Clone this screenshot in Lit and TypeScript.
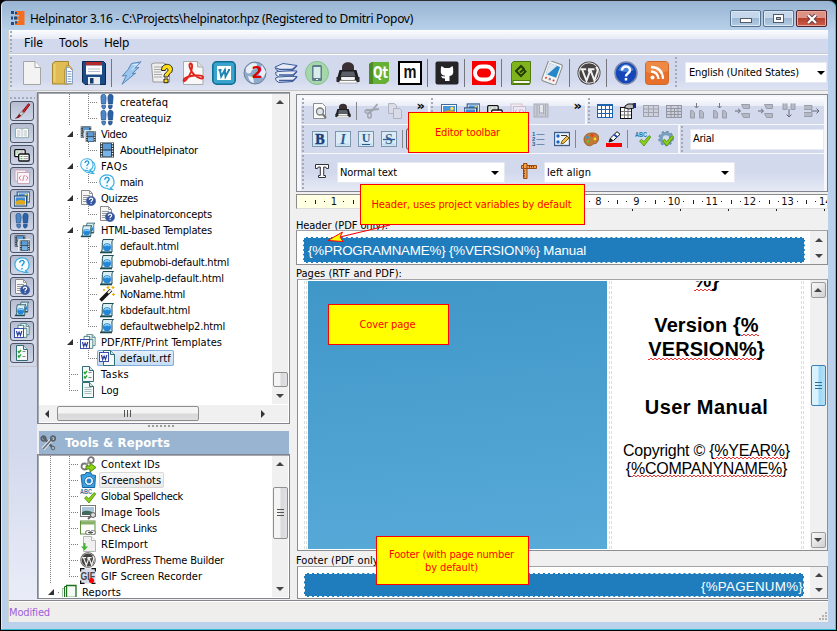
import { LitElement, html, css, svg } from "lit";
import { customElement, property } from "lit/decorators.js";

/* ---------- icons ---------- */

const page = svg`<path d="M2.5.5h7l4 4v11h-11z" fill="#f4f8f8" stroke="#2f6f73"/><path d="M9.5.5v4h4" fill="#d5e6e6" stroke="#2f6f73"/>`;
const wBadge = svg`<rect x="0.5" y="5.500" width="9" height="9" fill="#fff" stroke="#3a4fa8"/><path d="M2.500 8l1.200 4.500 1.400-3.500 1.400 3.500L7.800 8" fill="none" stroke="#2b3f9c" stroke-width="1.200"/>`;
const scroll = svg`<path d="M4 1.500h10.500c-2 1-1.500 3-1.500 5V14H2.500C4 10 2.500 6 4 1.500z" fill="#d9eef2" stroke="#1f4d55"/><path d="M1 14.500h12" stroke="#1f4d55" stroke-width="1.600"/><circle cx="8" cy="9.300" r="4" fill="#2486d6"/><path d="M5.500 8q2.500-2.500 5 0" fill="none" stroke="#8fd0ff" stroke-width="1.500"/>`;
const film = svg`<rect x="1" y="0.500" width="14" height="15" fill="#26343c"/><rect x="4" y="1.500" width="8" height="6" fill="#5c9bd8"/><rect x="4" y="8.500" width="8" height="6" fill="#79b3e8"/><path d="M2.500 1v14M13.500 1v14" stroke="#fff" stroke-width="1.400" stroke-dasharray="1.300 1.200"/>`;
const feet = svg`<path d="M2 4C1.500 1.500 3 0 4.500 0S7.500 2 7 5.500L6.500 10h-4zM2.700 11.500h3.800c.5 5-3.800 4.600-3.800 0z" fill="#4f86c6" stroke="#21518c" stroke-width=".7"/><path d="M14 4c.5-2.500-1-4-2.500-4S8.500 2 9 5.500l.5 4.500h4zM13.300 11.500H9.500c-.5 5 3.800 4.600 3.800 0z" fill="#2b62a4" stroke="#1b4680" stroke-width=".7"/>`;
const bubble = svg`<path d="M8 .8c8 0 9 10.400 3.500 13l2 1.700c-3 .3-4.500-.7-5.500-1C-1.500 14-1.500.8 8 .8z" fill="#f5fcff" stroke="#39ade0" stroke-width="1.200"/><path d="M5.800 5.800c0-3.400 4.700-3 4.300-.3C9.800 7.200 8 7 8 9.300M8 11v1.400" fill="none" stroke="#2496d2" stroke-width="1.400"/>`;
const quiz = svg`<path d="M1.500.5h8l3 3v11h-11z" fill="#f6f6f6" stroke="#8a8a8a"/><path d="M9.500.5v3h3M3 5.500h7M3 7.500h7M3 9.500h4M3 11.500h3" fill="none" stroke="#999"/><circle cx="11" cy="11" r="4.700" fill="#35559e" stroke="#4a68ab" stroke-width=".6"/><path d="M9.400 9.700c0-2 3.400-2 3.200 0-.1 1.100-1.500 1-1.500 2.200m0 .8v1" fill="none" stroke="#fff" stroke-width="1.200"/>`;
const wp = svg`<circle cx="12" cy="12" r="11.500" fill="#464342"/><circle cx="12" cy="12" r="10.200" fill="#464342" stroke="#e8e8e8" stroke-width="1"/><path d="M3.200 8.300h6M11 8.300h6.500M5.300 8.800l4.200 11 3-8.400-1-2.600m2 0l3.900 10.700 3-9c.8-2.500-1-2.800-1-4.600" fill="none" stroke="#f0f0f0" stroke-width="1.900"/>`;
const printer = svg`<path d="M6 11V6c0-6.500 12-6.500 12 0v5z" fill="#3a2f33"/><path d="M3.500 9h17l2.500 9H1z" fill="#1d1d1f"/><path d="M6 10.500h12l1.500 5h-15z" fill="#5a5f68"/><path d="M5.500 16h13l2 3.500h-17z" fill="#f2f2f2"/><path d="M.5 16h4l1 3h13l1-3h4v5H.5z" fill="#26272b"/><path d="M4 19.500h16l1.500 2.500h-19z" fill="#fff" stroke="#777" stroke-width=".5"/>`;
const pic = svg`<rect x=".5" y="1.500" width="15" height="12" fill="#fff" stroke="#3f6b9b"/><rect x="2" y="3" width="12" height="9" fill="#4a94db"/><path d="M2 9q6-3 12-.5V12H2z" fill="#d8a51c"/><circle cx="11" cy="5.500" r="1.700" fill="#ffe34a"/>`;
const palette = svg`<path d="M8 2c8-1 9 5 6.500 9-1.500 2.500-4 1-5.500 3-3 2.500-8.500-1-8-6 .3-3.500 3-5.700 7-6z" fill="#c17a36" stroke="#8a4b14" stroke-width=".7"/><circle cx="4.500" cy="6.500" r="1.400" fill="#2a9adf"/><circle cx="9" cy="4.500" r="1.400" fill="#ee3b2b"/><circle cx="12" cy="8" r="1.400" fill="#ffd91c"/><circle cx="5" cy="10.500" r="1.400" fill="#5fbf39"/>`;
const check = svg`<path d="M4.500 10l2-1.700 2.300 2.300 5.200-6 1.800 1.300L9 15z" fill="#8ccf18" stroke="#4a8a0a" stroke-width=".8"/>`;
const letterBox = svg`<rect x=".5" y=".5" width="15" height="15" fill="#dcecf7" stroke="#7b97ad"/><path d="M1.500 12.500h13v2h-13z" fill="#c2dcee"/>`;
const windows = svg`<rect x=".7" y="2.700" width="10.500" height="7" rx="1" fill="#fff" stroke="#111" stroke-width="1.300"/><rect x="4.700" y="7" width="10.500" height="7" rx="1" fill="#fff" stroke="#111" stroke-width="1.300"/><path d="M2.500 5h2M2.500 7h1M6.500 9.500h2M6.500 11.700h2" stroke="#3aa83a"/><path d="M5.500 5h4M9.500 9.500H14M9.500 11.700H14" stroke="#999"/>`;
const code = svg`<rect x="1" y="1" width="11" height="11" fill="#f6eef2" stroke="#c9a7b5"/><rect x="3.500" y="3.500" width="12" height="11" fill="#faf5f7" stroke="#c9a7b5"/><path d="M7 6.500L5 9l2 2.500M12 6.500L14 9l-2 2.500M10.300 6L8.700 12" fill="none" stroke="#dd7aa0"/>`;

const ICONS: Record<string, unknown> = {
  app: svg`<path d="M5 1h9.500v14H5v-4h4V9.500H5v-3h4V5H5z" fill="#f56d1e"/><path d="M1 1h3v3H1zM5 2h2v2H5zM1 6.500h2v3H1zM4 6.500h3v3H4zM1 12h3v3H1zM5 11.500h2v2H5z" fill="#1f4c7c"/>`,
  new: svg`<path d="M3.500.5H15l5.500 6v17h-17z" fill="#f3f3f3" stroke="#a5a5a5"/><path d="M15 .5v6h5.500" fill="#fff" stroke="#a5a5a5"/>`,
  open: svg`<path d="M1.500 2.500L4 .5h13.500v22.500h-16z" fill="#dfbd54" stroke="#a8842c"/><path d="M3.500 3v18" stroke="#ecd074" stroke-width="2"/><path d="M13.500 8.500q2 0 2-4h3l3 4v14.500h-8z" fill="#e6c35c" stroke="#a8842c" stroke-width=".7"/><path d="M15.500 6.500h3l3 3v13h-6z" fill="#fff" stroke="#8aa2bd"/><path d="M16.500 10.500h4M16.500 13h4M16.500 15.500h4M16.500 18h4M16.500 20.500h4" stroke="#7da1cd"/>`,
  save: svg`<path d="M.5.5h21l2 2v21H3L.5 21z" fill="#1d4b86" stroke="#0b2850"/><rect x="4" y="1" width="16" height="3.500" fill="#b22a2a"/><rect x="4" y="4.500" width="16" height="9" fill="#fff"/><path d="M6 8h12M6 10.500h12" stroke="#b5c0cc"/><rect x="6" y="16" width="12" height="7.500" fill="#e8eef4"/><rect x="8" y="17" width="3.500" height="5.500" fill="#173a66"/>`,
  bolt: svg`<path d="M12.500 2.500L22 .8 15.800 7l4.200-.6-7 6.400 3.600-.6L3 23.300l4.500-9-4.300.8L9 8.500z" fill="#9ac6ee" stroke="#5a88b8"/><path d="M13.500 4l5-1-6 6" fill="none" stroke="#e4f3ff"/>`,
  helpdoc: svg`<path d="M1.500 3l3-1h9l6 3v16H3z" fill="#eee" stroke="#999"/><path d="M4 6h9M4 8.500h7M4 11h7M4 13.500h8M4 16h8" stroke="#aaa"/><path d="M11.500 9.500c-.5-8 11-8 11-1 0 4-4.500 4-4.500 7.500h-4c0-5 4-4.500 4-7 0-2-2.700-1.800-2.700.5zM14 18h4v3.700h-4z" fill="#ffdd16" stroke="#222"/>`,
  pdf: svg`<path d="M2.500.5h14l5.500 5.500v17.500H2.500z" fill="#f8f8f8" stroke="#aaa"/><path d="M16.500.5V6H22" fill="#ddd" stroke="#aaa"/><path d="M3 18c-2 5 4 1 7-7 2-6 1-9-.5-8.500-2.500 1 0 7.500 3.500 11 5 4.500 9.500 5 9 2.500C21 13 7 14.500 3 18z" fill="none" stroke="#e0241b" stroke-width="1.900"/>`,
  word: svg`<rect x=".8" y=".8" width="22.400" height="22.400" rx="4" fill="#3aa4cd" stroke="#0d6f98" stroke-width="1.600"/><rect x="5" y="5" width="14" height="14" fill="#fff"/><path d="M6.500 9h3M12 9h2M16 9h2M8 9l1.200 6.500L12.800 9l.7 6.500L17 9" fill="none" stroke="#1d86b2" stroke-width="1.900"/>`,
  globe: svg`<circle cx="12" cy="12" r="11" fill="#8eabcb" stroke="#6d819a"/><path d="M3 7q6-7 11-4 0 5-5 6-2 6-6 2zM5 15l5 1 1 6q-5-1-6-7zM19 4l4 7-3 6-4-3z" fill="#e9eff6"/><text x="14" y="17" font-family="DejaVu Sans" font-size="16" font-weight="bold" fill="#d90000" text-anchor="middle">2</text>`,
  stack: svg`<g fill="#e6ebf6" stroke="#3d5c9c"><path d="M1.500 17l5-2 16.500.5-4 5-14 1q-4-1.500-3.500-4.500z"/><path d="M1.500 11.500l5-2L23 10l-4 5-14 1q-4-1.500-3.500-4.500z"/><path d="M1 6l8-3.500 14 2-4 5L5 10.500Q1 9 1 6z"/></g><path d="M2 7l4 1.500h12L23 4.800M5 14h14l4-3.500M5 19.500h14l4-3.500" fill="none" stroke="#3d5c9c" stroke-width="1.300"/>`,
  phone: svg`<circle cx="12" cy="12" r="11.500" fill="#a6d7ab" stroke="#84bf8d"/><rect x="7" y="4" width="10" height="16" rx="1.500" fill="#5e7c8d"/><rect x="8.500" y="6" width="7" height="11" fill="#d8ece9"/><path d="M11 18.500h2" stroke="#fff"/>`,
  printer,
  qt: svg`<path d="M2 3L5 1h17v19l-3.500 3H2z" fill="#66b036"/><path d="M2 3L5 1h1v22H2z" fill="#4b8c24"/><text x="13.500" y="17" font-family="DejaVu Sans Condensed" font-size="15" font-weight="bold" fill="#fff" text-anchor="middle" textLength="15" lengthAdjust="spacingAndGlyphs">Qt</text>`,
  m: svg`<rect x="1" y="1" width="22" height="22" fill="#fff" stroke="#000" stroke-width="2"/><text x="12" y="17" font-family="Liberation Sans" font-size="19" font-weight="bold" fill="#111" text-anchor="middle" textLength="13" lengthAdjust="spacingAndGlyphs">m</text>`,
  github: svg`<rect x=".5" y=".5" width="23" height="23" rx="2" fill="#252528"/><path d="M6.500 5l3 2h5l3-2q1 2 .7 5 .6 4.500-3.700 5V20H10v-2.500q-3 .5-4-2.500 2 0 4 .5v-.8Q5.300 14 5.800 10 5.500 7 6.500 5z" fill="#fff"/>`,
  oracle: svg`<rect width="24" height="24" fill="#f80000"/><rect x="3" y="5.500" width="18" height="13" rx="6.500" fill="none" stroke="#fff" stroke-width="4"/>`,
  epub: svg`<path d="M2.500 2.500l2-2h17v19l-1 4h-18z" fill="#7fb41d" stroke="#517b0c"/><path d="M4 19.500h17v3H4z" fill="#f7f5e6" stroke="#517b0c"/><path d="M15.500 8.500L12 5 7 10l5 5 4.500-4.500-2-2L11 11.500" fill="none" stroke="#243d08" stroke-width="2"/>`,
  mobi: svg`<g transform="rotate(20 12 12)"><rect x="4.500" y="1" width="15" height="21.500" rx="2" fill="#f3f3f3" stroke="#888"/><path d="M6.500 3.500h11V15h-11z" fill="#2786c9"/><path d="M6.500 3.500h8L8 15H6.500z" fill="#dce7ef"/><circle cx="8" cy="18.500" r="1" fill="#e33"/><circle cx="12" cy="18.500" r="1.300" fill="#888"/><circle cx="16" cy="18.500" r="1" fill="#e33"/></g>`,
  wp,
  help: svg`<circle cx="12" cy="12" r="11" fill="#1546b8" stroke="#7a87a8" stroke-width="1.500"/><path d="M4 9q8-12 16 0-8 4-16 0z" fill="#4a7fdb"/><path d="M8 9.500c0-5.500 8.500-5 8 0-.3 3-4 2.500-4 6M12 17v2.500" fill="none" stroke="#fff" stroke-width="2.500"/>`,
  rss: svg`<rect x=".5" y=".5" width="23" height="23" rx="3" fill="#e8702a" stroke="#cf6b2a"/><path d="M1 1h22v9Q12 14 1 11z" fill="#f09a58" opacity=".6"/><circle cx="7.500" cy="16.500" r="2" fill="#fff"/><path d="M6 10.500q7 .5 7.500 7.500M6 6q11.500.5 12 12" fill="none" stroke="#fff" stroke-width="2.300"/>`,

  feet, film, bubble, quiz, scroll, pic, palette, windows, code,
  films: svg`<g transform="scale(.75)">${film}</g><g transform="translate(5 5) scale(.72)"><rect x="-1" y="-1" width="18" height="18" fill="#fff"/>${film}</g>`,
  bubbles: svg`<g transform="translate(2 2) scale(.87)">${bubble}</g><g transform="scale(.87)">${bubble}</g>`,
  scrolls: svg`<g transform="translate(4 0) scale(.75)">${scroll}</g><g transform="translate(0 2.500) scale(.83)">${scroll}</g>`,
  wand: svg`<path d="M1.500 14.500L12 4" stroke="#151515" stroke-width="3.500"/><path d="M9 7l3-3" stroke="#eee" stroke-width="2"/><path d="M9 0v3M7.500 1.500h3M14 0v3M12.500 1.500h3M14.500 7v3M13 8.500h3M5 3v2M4 4h2" stroke="#e8b400" stroke-width="1.200"/>`,
  docs: svg`<g transform="translate(5 0) scale(.75)">${page}</g><g transform="translate(2 2) scale(.8)">${page}</g>${wBadge}`,
  rtf: svg`<g transform="translate(2 0)">${page}</g><g transform="translate(0 -3)">${wBadge}</g>`,
  tasks: svg`${page}<path d="M4 6l1 1.500 2-2.500M4 10.500L5 12l2-2.500" fill="none" stroke="#26a32a" stroke-width="1.400"/><path d="M8.500 6.500h3M8.500 11.500h3" stroke="#888"/>`,
  log: svg`${page}<path d="M4.500 5.500h7M4.500 7.500h7M4.500 9.500h7M4.500 11.500h7" stroke="#a8bcbc"/>`,

  brush: svg`<path d="M8.500 8L14.500.7l1.300 1L10 9.500z" fill="#d4262f" stroke="#811"/><path d="M7 8.500l2.500 1.800-2 2.500-2.500-1.500z" fill="#ccc" stroke="#777" stroke-width=".6"/><path d="M5 11l2.300 1.800Q5 16 .5 15.500 3.500 14 5 11z" fill="#7c1c1c"/>`,
  book: svg`<rect x=".5" y="3" width="15" height="10.500" fill="#a5d1e8"/><path d="M1.500 3.500q3-1 6.500.5 3.500-1.500 6.500-.5v9q-3-1-6.500.5-3.500-1.500-6.500-.5z" fill="#fff" stroke="#9aa"/><path d="M8 4v9M3 6h3.500M3 8h3.500M3 10h3.500M9.500 6H13M9.500 8H13M9.500 10H13" stroke="#b5bcc0"/>`,
  pics: svg`<g transform="translate(3 0) scale(.8)"><rect x="-.5" y=".5" width="17" height="14" fill="#3f6b9b"/>${pic}</g><g transform="translate(0 4) scale(.8)"><rect x="-.5" y=".5" width="17" height="14" fill="#234a73"/><rect x="1" y="2" width="14" height="11" fill="#fff"/><rect x="2" y="3" width="12" height="9" fill="#3f8ad4"/><path d="M2 8q6-3 12-.5V12H2z" fill="#e0a81c"/></g>`,

  preview: svg`<path d="M1.500.5h9l3 3v12h-12z" fill="#fafafa" stroke="#8f8f8f"/><circle cx="8" cy="8.500" r="3.500" fill="#dfe7ee" stroke="#777" stroke-width="1.300"/><path d="M10.500 11l3.500 4" stroke="#777" stroke-width="2"/>`,
  print: svg`<g transform="scale(.667)">${printer}</g>`,
  cut: svg`<path d="M13.500 1L6 10M2.500 7.500L15 6" stroke="#a0a4b0" stroke-width="1.800"/><ellipse cx="3.500" cy="8.500" rx="2.500" ry="1.800" fill="none" stroke="#a0a4b0" stroke-width="1.400"/><ellipse cx="5.500" cy="12.500" rx="1.800" ry="2.500" fill="none" stroke="#a0a4b0" stroke-width="1.400"/>`,
  copy: svg`<path d="M1.500.5h6l2 2v8h-8z" fill="#d9dce6" stroke="#b0b4c0"/><path d="M6.500 5.500h6l2 2v8h-8z" fill="#d9dce6" stroke="#b0b4c0"/>`,
  gcode: svg`<g opacity=".6">${code}</g>`,
  graybook: svg`<rect x="1" y="1" width="14" height="13" fill="#c6c9d4" stroke="#a9adb9"/><path d="M4 2v11M6.500 2v9l2-2 2 2V2M12.500 2v11" fill="#e6e8ef" stroke="#a9adb9"/>`,
  table: svg`<rect x=".5" y="1.500" width="15" height="13" fill="#fff" stroke="#1d63ae"/><path d="M0 2.500h16M.5 6.500h15M.5 10.500h15M4.500 2v12M8.500 2v12M12.500 2v12" stroke="#1d63ae"/>`,
  tableprops: svg`<rect x=".5" y="4.500" width="11" height="11" fill="#fff" stroke="#111"/><path d="M1 8.500h10M1 12h10M4.500 5v10M8 5v10" stroke="#777"/><path d="M5 3l3-2h5l1 4-5 1-4-1z" fill="#bbb" stroke="#111"/><path d="M13 0h3v5h-2z" fill="#1b2c78"/>`,
  gtable: svg`<rect x=".5" y="2.500" width="15" height="11" fill="#cdd0db" stroke="#9fa3b0"/><path d="M1 6h14M1 9.500h14M5.500 3v10M10.500 3v10" stroke="#9fa3b0"/>`,
  gtable2: svg`<rect x=".5" y="2.500" width="15" height="12" fill="#cdd0db" stroke="#9296a3"/><path d="M1 5.500h14M1 8.500h14M1 11.500h14M5 3v11M8.500 5v9M12 3v11" stroke="#9296a3"/>`,
  gcols: svg`<path d="M1.500 15V7.500h2l2 2V15zM10.500 15V7.500h2l2 2V15z" fill="#b5b9c6" stroke="#9a9eab"/><path d="M7.500 0v5M5.500 3l2 2 2-2" fill="none" stroke="#777b88"/>`,
  grows: svg`<path d="M6.500 1.500h8v4h-6zM6.500 10.500h8v4h-6z" fill="#b5b9c6" stroke="#9a9eab"/><path d="M0 8h5M3 5.800L5.500 8 3 10.200" fill="none" stroke="#666a77"/>`,
  gsplit: svg`<path d="M2 .5v6h4v-6M10 .5v6h4v-6" fill="#b5b9c6" stroke="#9a9eab"/><path d="M8 6v8M5.500 11.500L8 14l2.500-2.500" fill="none" stroke="#666a77"/>`,
  gsplit2: svg`<path d="M0 2.500h8v4H0M0 9.500h8v4H0" fill="#b5b9c6" stroke="#9a9eab"/><path d="M7 8h8M12.500 5.500L15 8l-2.500 2.500" fill="none" stroke="#666a77"/>`,

  bold: svg`${letterBox}<text x="8" y="13" font-family="Liberation Serif" font-size="14" font-weight="bold" fill="#173e7c" stroke="#173e7c" stroke-width=".5" text-anchor="middle">B</text>`,
  italic: svg`${letterBox}<text x="8" y="13" font-family="Liberation Serif" font-size="14" font-style="italic" font-weight="bold" fill="#2b5a96" text-anchor="middle">I</text>`,
  underline: svg`${letterBox}<text x="8" y="11" font-family="Liberation Serif" font-size="12" font-weight="bold" fill="#2b5a96" text-anchor="middle">U</text><path d="M4 13.500h8" stroke="#2b5a96"/>`,
  strike: svg`${letterBox}<text x="8" y="13" font-family="Liberation Serif" font-size="14" font-weight="bold" fill="#3f6894" text-anchor="middle">S</text><path d="M2 8.500h12" stroke="#2b5a96" stroke-width="1.300"/>`,
  numlist: svg`<g font-family="Liberation Sans" font-size="6" font-weight="bold" fill="#2d5c92"><text x="1" y="5">1</text><text x="1" y="10">2</text><text x="1" y="15">3</text></g><path d="M5.500 3.500h8M5.500 8.500h8M5.500 13.500h8" stroke="#6d8fb1"/>`,
  form: svg`<rect x=".5" y="1.500" width="15" height="13" fill="#eef3fa" stroke="#375c8d" stroke-width="1.300"/><circle cx="4" cy="5" r="1.700" fill="#1967c4"/><circle cx="4" cy="11" r="1.700" fill="#1967c4"/><path d="M7 4.500h6" stroke="#333"/><path d="M7 13l1-3 5-5 2 2-5 5z" fill="#f2c552" stroke="#7c5b17"/>`,
  pen: svg`<rect x="0" y="12" width="16" height="4" fill="#f00"/><path d="M3 11l1.500-4L11 .7l3 2.600L7.500 9.500z" fill="#fff" stroke="#111"/><path d="M3 11l1.500-4L7.500 9.500z" fill="#222"/><path d="M8 3.500l3 2.500" stroke="#2545bd" stroke-width="2"/>`,
  abc: svg`<text x="0" y="5.500" font-family="Liberation Sans" font-size="6.500" font-weight="bold" fill="#2b78a8" textLength="12" lengthAdjust="spacingAndGlyphs">ABC</text>${check}`,
  gearcheck: svg`<circle cx="8" cy="7.500" r="5" fill="#cfdfeb" stroke="#7b9fbd" stroke-width="3.500"/><circle cx="8" cy="7.500" r="7" fill="none" stroke="#6e94b4" stroke-width="1.600" stroke-dasharray="2.500 2.200"/>${check}`,
  type: svg`<path d="M1.500 1.500h13v4h-2q0-1.500-1.500-1.500H9.700v8.500h1.800v2h-7v-2h1.800V4H5Q3.500 4 3.500 5.500h-2z" fill="#fff" stroke="#2f3338"/>`,
  ruler: svg`<path d="M.5 2.500h15v3H6v10H2.500v-10h-2z" fill="#f0a050" stroke="#9b4b0d"/><path d="M2.500.5H6v5H2.500z" fill="#f0a050" stroke="#9b4b0d"/><path d="M8.500 3v1.500M10.500 3v1.500M12.500 3v1.500M2.500 8h1.500M2.500 10.500h1.500M2.500 13h1.500" fill="none" stroke="#6f3203"/>`,

  tools: svg`<path d="M3 2l10 11" stroke="#56606b" stroke-width="2.600"/><path d="M13 3L3 14" stroke="#e7ebef" stroke-width="3.600"/><path d="M13 3L3 14" stroke="#69737d" stroke-width="1.800"/><circle cx="3.500" cy="3.500" r="2.300" fill="none" stroke="#59626b" stroke-width="1.700"/><circle cx="13" cy="3.500" r="2.300" fill="none" stroke="#59626b" stroke-width="1.700"/><circle cx="13" cy="13" r="1.800" fill="#aab2ba" stroke="#59626b"/>`,
  context: svg`<circle cx="11" cy="4" r="2.800" fill="none" stroke="#777" stroke-width="1.800"/><circle cx="4.500" cy="10.500" r="3" fill="none" stroke="#777" stroke-width="1.800"/><path d="M6 9l4-4" stroke="#999" stroke-width="2"/><path d="M6 10h4V7l6 4.500-6 4.500v-3H6z" fill="#8cd614" stroke="#4e8b08"/>`,
  camera: svg`<path d="M1 3l4-.5 1-2 5 .3.500 2 4 .700-.8 12H2.500z" fill="#3fa0e0" stroke="#14659f"/><circle cx="9" cy="9" r="4.500" fill="#e5f4ff" stroke="#1d74b5"/><circle cx="9" cy="9" r="2.400" fill="#2782c7"/>`,
  imgtools: svg`<rect x=".5" y="1.500" width="15" height="11" fill="#fff" stroke="#777"/><path d="M2 3h12v5H2z" fill="#aac5d8"/><path d="M2 8q5-3 12 1v2H2z" fill="#426b5c"/><circle cx="13" cy="11" r="2.500" fill="#ddd" stroke="#666"/><path d="M11 12l-3 3" stroke="#666" stroke-width="2"/>`,
  links: svg`<rect x=".5" y="1" width="14.500" height="13" fill="#fdfefb" stroke="#5f8f3b"/><path d="M1 1.500h13.500v3H1z" fill="#85b15f"/><rect x="5.500" y="10.500" width="5" height="4" rx="2" fill="#eee" stroke="#777"/><rect x="10.500" y="10.500" width="5" height="4" rx="2" fill="#eee" stroke="#777"/><path d="M8 12.500h5" stroke="#555"/>`,
  reimport: svg`<path d="M3.500.5h8l4 4v11h-12z" fill="#f0f0f0" stroke="#b5b5b5"/><path d="M11.500.5v4h4" fill="#fff" stroke="#b5b5b5"/><path d="M3.500 7h2v3.500H8l-3.500 4-3.500-4h2.500z" fill="#45b336"/>`,
  wpsmall: svg`<g transform="scale(.667)">${wp}</g>`,
  gif: svg`<rect x=".5" y=".5" width="15" height="15" fill="#d9dbe9"/><path d="M.5 3.500v-3h4M11.500.5h4v3M.5 12.500v3h4M11.500 15.500h4" fill="none" stroke="#111" stroke-width="1.400"/><text x=".5" y="12" font-family="Liberation Sans" font-size="11" font-weight="bold" fill="#444" textLength="14.500" lengthAdjust="spacingAndGlyphs">GIF</text><circle cx="11.500" cy="12.500" r="2.600" fill="#f00"/>`,
  reports: svg`<path d="M1.500 4.500h9v10h-9z" fill="#fff" stroke="#4c8a4c" stroke-dasharray="1 1"/><path d="M3.500 2.500h9v11h-9z" fill="#fff" stroke="#1f6d1f"/><path d="M5.500 1.500h9.500v12H5.500z" fill="#f5fbf5" stroke="#1f6d1f" stroke-width="1.300"/>`,
};

const icon = (name: string, size = 16, box = 16) =>
  html`<svg class="ic" width=${size} height=${size} viewBox="0 0 ${box} ${box}">${ICONS[name]}</svg>`;

/* ---------- a one-line label set to a given width ---------- */

@customElement("fit-label")
export class FitLabel extends LitElement {
  @property() text = "";
  @property({ type: Number }) w = 0;

  static styles = css`
    :host { display: inline-block; white-space: pre; flex: none; }
    .t { display: inline-block; }
  `;

  render() {
    return html`<span class="t">${this.text}</span>`;
  }

  updated() {
    const span = this.renderRoot.querySelector<HTMLElement>(".t")!;
    span.style.letterSpacing = "0";
    const natural = span.getBoundingClientRect().width;
    if (this.w && this.text.length > 1) {
      span.style.letterSpacing = `${(this.w - natural) / this.text.length}px`;
    }
  }
}

const label = (text: string, w: number) => html`<fit-label .text=${text} .w=${w}></fit-label>`;

/* ---------- data ---------- */

type Row = { g: string[]; i: string; t: string; w: number; sel?: string };

const TREE: Row[] = [
  { g: ["v", "t"], i: "feet", t: "createfaq", w: 48 },
  { g: ["v", "l"], i: "feet", t: "createquiz", w: 51 },
  { g: ["a"], i: "films", t: "Video", w: 26 },
  { g: ["v", "l"], i: "film", t: "AboutHelpinator", w: 78 },
  { g: ["a"], i: "bubbles", t: "FAQs", w: 27 },
  { g: ["v", "l"], i: "bubble", t: "main", w: 23 },
  { g: ["a"], i: "quiz", t: "Quizzes", w: 37 },
  { g: ["v", "l"], i: "quiz", t: "helpinatorconcepts", w: 92 },
  { g: ["a"], i: "scrolls", t: "HTML-based Templates", w: 111 },
  { g: ["v", "t"], i: "scroll", t: "default.html", w: 59 },
  { g: ["v", "t"], i: "scroll", t: "epubmobi-default.html", w: 109 },
  { g: ["v", "t"], i: "scroll", t: "javahelp-default.html", w: 104 },
  { g: ["v", "t"], i: "wand", t: "NoName.html", w: 65 },
  { g: ["v", "t"], i: "scroll", t: "kbdefault.html", w: 70 },
  { g: ["v", "l"], i: "scroll", t: "defaultwebhelp2.html", w: 105 },
  { g: ["a"], i: "docs", t: "PDF/RTF/Print Templates", w: 121 },
  { g: ["v", "l"], i: "rtf", t: "default.rtf", w: 51, sel: "blue" },
  { g: ["t"], i: "tasks", t: "Tasks", w: 28 },
  { g: ["l"], i: "log", t: "Log", w: 18 },
];

const TOOLS: Row[] = [
  { g: ["v", "t"], i: "context", t: "Context IDs", w: 59 },
  { g: ["v", "t"], i: "camera", t: "Screenshots", w: 60, sel: "gray" },
  { g: ["v", "t"], i: "abc", t: "Global Spellcheck", w: 82 },
  { g: ["v", "t"], i: "imgtools", t: "Image Tools", w: 59 },
  { g: ["v", "t"], i: "links", t: "Check Links", w: 56 },
  { g: ["v", "t"], i: "reimport", t: "REImport", w: 47 },
  { g: ["v", "t"], i: "wpsmall", t: "WordPress Theme Builder", w: 123 },
  { g: ["v", "l"], i: "gif", t: "GIF Screen Recorder", w: 101 },
  { g: ["a"], i: "reports", t: "Reports", w: 39 },
];

const MAIN_BAR = [
  "new", "open", "save", "|", "bolt", "helpdoc", "pdf", "word", "globe", "stack", "phone",
  "printer", "qt", "m", "|", "github", "|", "oracle", "|", "epub", "mobi", "|", "wp", "|", "help", "rss",
];

const SIDE = ["brush", "book", "windows", "code", "pics", "feet", "films", "bubble", "quiz", "scrolls", "docs", "tasks"];

const TABLE_BAR = ["table", "tableprops", "gtable", "gtable2", "gcols", "gcols", "grows", "grows", "gsplit", "gsplit2"];

/* the callout covers centimetres 3 to 7 of the ruler */
const RULER = Array.from({ length: 15 }, (_, i) => (i === 0 || (i > 2 && i < 8) ? "" : String(i)));
const TABS = Array.from({ length: 5 }, (_, i) => i);

/* ---------- page ---------- */

@customElement("app-root")
export class AppRoot extends LitElement {
  static styles = css`
    * { box-sizing: border-box; }
    :host {
      display: block; position: relative; width: 837px; height: 631px; overflow: hidden;
      background: #000; color: #000;
      font: 11px/16px "DejaVu Sans Condensed", "Noto Sans", sans-serif;
    }
    .ic { display: block; flex: none; }
    .row { display: flex; }
    .window {
      display: flex; flex-direction: column; width: 835px; height: 630px; margin-left: 1px;
      padding: 0 8px 7px 7px; border-radius: 6px 7px 0 0; border-top: 1px solid #2c2c30;
      border-bottom: 1px solid #35bcd0;
      background: linear-gradient(#98b4d2, #b9d1ea 30px, #b9d1ea);
      box-shadow: inset 1px 0 #dcebf8, inset -1px 0 #43c6dc;
    }
    .title { display: flex; height: 29px; padding-left: 2px; align-items: flex-start; flex: none; }
    .title > .ic { margin: 9px 4px 0 0; }
    .title fit-label { margin-top: 10px; font: 12px/16px "Noto Sans", sans-serif; }
    .caps { display: flex; gap: 2px; margin: 9px 1px 0 auto; }
    .cap {
      display: grid; place-items: center; width: 31px; height: 17px; border: 1px solid #56708f; border-radius: 2px;
      background: linear-gradient(#c5d7ea 45%, #9db8d3 50%, #b4cce3); box-shadow: inset 0 0 0 1px #dbe8f4;
    }
    .cap.min { align-items: end; padding-bottom: 2px; }
    .cap.close { background: linear-gradient(#dc9284 45%, #b8402c 50%, #c9604a); border-color: #50222b; box-shadow: inset 0 0 0 1px #e9a99c; }
    .client { display: flex; flex-direction: column; flex: 1; min-height: 0; background: #f0f0f0; border-left: 1px solid #d5d2c8; }
    .grip {
      flex: none; width: 3px; align-self: stretch; margin: 1px 0;
      background: repeating-linear-gradient(#a6a9b8 0 2px, transparent 2px 4px) 0 0/2px 100% no-repeat;
    }
    .menu {
      display: flex; height: 24px; padding: 0 0 0 1px; border-bottom: 1px solid #c8cbd6; flex: none;
      background: linear-gradient(#fdfdff, #e6eaf5 9px, #d3d9ed 9px, #d3d9ed);
      font: 12px/26px "Noto Sans", sans-serif; align-items: center;
    }
    .menu .m1, .menu .m2 { margin: 2px 0 0 16px; }
    .menu .m1 { margin-left: 11px; }
    .bar { display: flex; height: 37px; padding: 1px 0 1px 1px; flex: none; align-items: center; border-top: 1px solid #fff; border-bottom: 1px solid #c9c6c6;
      background: linear-gradient(#d3d9ed 70%, #dfe4f4); }
    .cell { width: 31px; display: grid; place-items: center; flex: none; }
    .cells { display: flex; align-items: center; height: 35px; margin-left: 3px; width: 659px; }
    .sep { width: 6px; height: 28px; flex: none; background: linear-gradient(#75757d, #75757d) 2px 0/1px 100% no-repeat; }
    .combo { display: flex; align-items: center; justify-content: space-between; background: #fff; border: 1px solid #e6e9f2; height: 21px; flex: none; padding: 0 5px 0 2px; }
    .combo::after { content: ""; border: 4px solid transparent; border-top: 4px solid #000; border-bottom: 0; }
    .combo.plain::after { display: none; }
    .lang { width: 142px; margin-left: 7px; padding: 0 1px 0 3px; }
    .body { display: flex; flex: 1; min-height: 0; }
    .side { width: 28px; background: linear-gradient(#d3d9ed 70%, #e9ecf8); padding: 2px 0 0 0; }
    .sidebox { border-bottom: 1px solid #c7c7cb; border-right: 1px solid #c7c7cb; padding: 4px 0 2px 1px; height: 274px; display: flex; flex-direction: column; gap: 2px; }
    .hgrip { height: 3px; margin: 0 1px -1px 0; background: repeating-linear-gradient(90deg, #a6a9b8 0 2px, transparent 2px 4px) 0 0/100% 2px no-repeat; }
    .sbtn { width: 24px; height: 20px; border: 1.500px solid #4c5464; border-radius: 3px; display: grid; place-items: center; background: linear-gradient(#b6bdd2, #d0d6e8); flex: none; }
    .left { width: 254px; display: flex; flex-direction: column; padding-top: 1px; }
    .panel { border: 1px solid #82858f; background: #fff; box-shadow: inset 1px 1px #a5a8b0; padding: 1px; display: flex; overflow: hidden; flex: none; }
    .p1 { height: 332px; flex-direction: column; margin-right: 1px; }
    .p1 .row { height: 310px; flex: none; }
    .tree { flex: 1; overflow: hidden; min-width: 0; }
    .tree.t1 { padding-left: 20px; }
    .tree.t2 { padding-left: 1px; }
    .tr { display: flex; height: 16px; align-items: center; }
    .g { width: 19px; height: 16px; flex: none; background-repeat: no-repeat;
      --v: repeating-linear-gradient(#7e7e7e 0 1px, transparent 1px 2px);
      --h: repeating-linear-gradient(90deg, #7e7e7e 0 1px, transparent 1px 2px); }
    .g.v { background-image: var(--v); background-position: 10px 0; background-size: 1px 100%; }
    .g.t { background-image: var(--v), var(--h); background-position: 10px 0, 10px 8px; background-size: 1px 100%, 9px 1px; }
    .g.l { background-image: var(--v), var(--h); background-position: 10px 0, 10px 8px; background-size: 1px 9px, 9px 1px; }
    .g.a { background-image: var(--h); background-position: 18px 8px; background-size: 3px 1px; display: flex; align-items: center; }
    .g.a::after { content: ""; margin-left: 8px; width: 6px; height: 6px; background: #303030; clip-path: polygon(100% 0, 100% 100%, 0 100%); }
    .tr .ic { margin-left: 2px; z-index: 1; }
    .nm { margin-left: 3px; padding: 0 3px 0 2px; height: 16px; display: flex; align-items: center; border-radius: 2px; }
    .nm fit-label { line-height: 15px; }
    .tr.blue .nm { background: linear-gradient(#e6f1fc, #c4dcf5); box-shadow: inset 0 0 0 1px #84acdd; margin-left: -18px; padding-left: 23px; }
    .tr.gray .nm { background: linear-gradient(#fafafa, #e8e8e8); box-shadow: inset 0 0 0 1px #d8d8d8; }
    .vs { width: 16px; background: #f0f0f0; display: flex; flex-direction: column; align-items: center; flex: none; padding: 6px 0; }
    .up, .dn { border: 4px solid transparent; width: 0; height: 0; flex: none; }
    .up { border-bottom: 4px solid #444; border-top: 0; }
    .dn { border-top: 4px solid #444; border-bottom: 0; margin-top: auto; }
    .thumb { border: 1px solid #8f8f8f; border-radius: 2px; background: linear-gradient(90deg, #f4f4f4 45%, #d8d8da 55%, #e2e2e4); width: 15px; flex: none; display: grid; place-items: center; }
    .th1 { height: 15px; margin-top: 268px; }
    .th2 { height: 52px; margin-top: 21px; }
    .lines { width: 7px; height: 8px; background: repeating-linear-gradient(#555 0 1px, transparent 1px 3px); }
    .hs { display: flex; align-items: center; height: 17px; margin-top: 1px; background: #f0f0f0; padding: 0 23px 0 6px; }
    .hs .lt, .hs .rt { border: 4px solid transparent; width: 0; height: 0; }
    .hs .lt { border-right: 4px solid #333; border-left: 0; }
    .hs .rt { border-left: 4px solid #333; border-right: 0; margin-left: auto; }
    .hthumb { width: 142px; height: 15px; margin-left: 8px; border: 1px solid #8f8f8f; border-radius: 2px; background: linear-gradient(#f4f4f4 45%, #d8d8da 55%, #dedee0); display: grid; place-items: center; }
    .hlines { width: 8px; height: 7px; background: repeating-linear-gradient(90deg, #555 0 1px, transparent 1px 3px); }
    .split { height: 7px; background: repeating-linear-gradient(90deg, #9b9b9b 0 2px, transparent 2px 4px) 111px 1px/27px 2px no-repeat; flex: none; }
    .head { height: 23px; margin: 0 2px; background: #99b4d1; color: #fff; display: flex; align-items: center; flex: none; padding-left: 1px; font: bold 13px/22px "DejaVu Sans Condensed", sans-serif; }
    .head fit-label { margin-left: 9px; }
    .p2 { height: 145px; margin-right: 1px; }
    .gap { width: 5px; }

    .right { flex: 1; min-width: 0; display: flex; flex-direction: column; padding-top: 3px; }
    .bands { height: 98px; border: 1px solid #85878f; padding: 2px 3px 0 4px; background: #f6f7fb; flex: none; display: flex; flex-direction: column; gap: 1px; }
    .bands > .row { gap: 2px; }
    .band { display: flex; align-items: center; padding-left: 1px; background: #d3d9ed; flex: none; }
    .b1 { height: 27px; background: linear-gradient(#fdfdff, #e9ecf6 9px, #d3d9ed 9px, #d3d9ed); }
    .b2 { height: 28px; }
    .b3 { height: 37px; background: linear-gradient(#d3d9ed 50%, #e6eaf6); }
    .w1 { width: 127px; } .w2 { width: 155px; } .w3 { flex: 1; } .w4 { width: 377px; }
    .band .grip + * { margin-left: 3px; }
    .w3 .grip + .c { margin-left: 2px; }
    .c { width: 23px; flex: none; display: grid; place-items: center; }
    .s { width: 6px; height: 18px; flex: none; background: linear-gradient(#85858d, #85858d) 2px 0/1px 100% no-repeat; }
    .more { font: bold 13px/12px "DejaVu Sans", sans-serif; margin: -10px 3px 0 auto; }
    .held { width: 121px; display: flex; flex: none; }
    .held::before { content: ""; width: 22px; height: 20px; border: 1px solid #4c5464; border-radius: 3px; }
    .font { width: 134px; margin-left: 6px !important; }
    .style { width: 168px; margin-left: 4px; }
    .align { width: 191px; margin-left: 4px; }
    .b3 .c { margin-top: -4px; }
    .b3 .c + .combo + .c { margin-left: 12px; }
    .b3 .grip + .c { margin-left: 5px; }
    .ruler { height: 15px; margin: 2px 0 0 0; border: 1px solid #8b8b8b; border-right-color: #ddd; border-bottom-color: #ddd; overflow: hidden; background: linear-gradient(90deg, #ffffe1 287px, #fff 287px); flex: none; display: flex; padding-left: 18px; font: 11px/14px "DejaVu Sans Condensed", sans-serif; }
    .cm { width: 37.800px; flex: none; text-align: center; color: #111;
      background:
        linear-gradient(#222, #222) 0 5px/1px 4px no-repeat,
        linear-gradient(#222, #222) 9px 6px/1px 1px no-repeat,
        linear-gradient(#222, #222) 28px 6px/1px 1px no-repeat; }
    .cm:first-child { margin-left: -37.800px; }
    .tabs { display: flex; height: 9px; margin-left: 336px; flex: none; overflow: hidden; }
    .tab { width: 48px; height: 2px; border-left: 1px solid #222; flex: none; }
    .lab { flex: none; }
    .l1 { height: 12px; line-height: 15px; }
    .l2 { height: 14px; line-height: 17px; }
    .l3 { height: 15px; line-height: 19px; }
    .lab fit-label { line-height: inherit; }
    .ed { border: 1px solid #8d8d92; border-top-color: #a4a4a8; background: #fff; display: flex; flex: none; overflow: hidden; }
    .e1 { height: 35px; }
    .e2 { height: 272px; margin-left: 1px; }
    .e3 { height: 33px; margin-left: 1px; }
    .strip { flex: 1; border: 1px dashed #fff; background: #1f7dbd; color: #fff; font: 13.330px/25px "Liberation Sans", Arial, sans-serif; }
    .e1 .strip { margin: 6px 5px 1px 6px; padding-left: 4px; }
    .e3 .strip { margin: 6px 6px 1px 6px; text-align: right; padding-right: 0; }
    .vm { width: 17px; background: #f0f0f0; display: flex; flex-direction: column; align-items: center; padding: 7px 0 6px; flex: none; }
    .e3 .vm { padding: 6px 0; }
    .pages { display: flex; flex: 1; padding: 1px 6px 1px 6px; min-width: 0; }
    .dash { width: 3px; flex: none; border-left: 1px dashed #dedede; border-right: 1px dashed #dedede; }
    .cover { width: 299px; margin: 0 2px 0 1px; background: linear-gradient(175deg, #3f97c8, #58aad8); flex: none; }
    .doc { flex: 1; display: flex; flex-direction: column; align-items: center; font: bold 20px/24px "Liberation Sans", Arial, sans-serif; letter-spacing: .1px; overflow: hidden; }
    .doc p { margin: 0; white-space: nowrap; flex: none; }
    .bad {
      background:
        repeating-linear-gradient(90deg, #e33 0 2px, transparent 2px 4px) 0 100%/100% 1px no-repeat,
        repeating-linear-gradient(90deg, transparent 0 2px, #e33 2px 4px) 0 calc(100% - 1px)/100% 1px no-repeat;
    }
    .doc .d0 { margin-top: -13px; }
    .doc .d1 { margin-top: 21px; }
    .doc .d2 { margin-top: 34px; letter-spacing: .4px; }
    .doc .d3 { margin-top: 23px; }
    .doc .sm { font: 16px/18px "Liberation Sans", Arial, sans-serif; letter-spacing: -.25px; }
    .bs { width: 17px; background: #f0f0f0; display: flex; flex-direction: column; align-items: center; flex: none; padding: 2px 1px 2px 0; }
    .btn { width: 15px; height: 16px; border: 1px solid #9a9a9a; border-radius: 2px; background: linear-gradient(135deg, #fafafa, #cfcfd3); display: grid; place-items: center; flex: none; }
    .btn .dn { margin: 0; }
    .bthumb { width: 15px; height: 41px; margin-top: 67px; border: 1px solid #3d7fb1; border-radius: 2px; background: linear-gradient(90deg, #d9f2fd 45%, #9bd7f5 55%, #b6e2f8); display: grid; place-items: center; flex: none; }
    .bthumb .lines { background: repeating-linear-gradient(#2f6f96 0 1px, transparent 1px 3px); }
    .bs .btn:last-child { margin-top: auto; }
    .status { height: 22px; background: #f0eded; border-top: 1px solid #85858a; box-shadow: inset 0 1px #fff; color: #9b5fd8; display: flex; justify-content: space-between; align-items: center; flex: none; }
    .status fit-label { margin-top: 2px; }
    .status .ic { align-self: flex-end; margin: 0 1px 1px 0; }

    .note { position: absolute; border: 1px solid #f00; background: #ff0; color: #f00; display: flex; flex-direction: column; align-items: center; justify-content: center; line-height: 13px; }
    .note fit-label { margin-left: -2px; }
    .n1 { left: 408px; top: 112px; width: 121px; height: 41px; }
    .n2 { left: 360px; top: 184px; width: 225px; height: 41px; }
    .n3 { left: 328px; top: 304px; width: 121px; height: 41px; }
    .n4 { left: 376px; top: 536px; width: 153px; height: 49px; }
    .arrow { position: absolute; left: 326px; top: 223px; }
  `;

  private tree(rows: Row[]) {
    return rows.map(
      (r) => html`<div class="tr ${r.sel ?? ""}">
        ${r.g.map((g) => html`<span class="g ${g}"></span>`)}${icon(r.i)}
        <span class="nm">${label(r.t, r.w)}</span>
      </div>`,
    );
  }

  private cells(names: string[]) {
    return names.map((n) => (n === "|" ? html`<span class="s"></span>` : html`<span class="c">${icon(n)}</span>`));
  }

  private bands() {
    return html`<div class="bands">
      <div class="row">
        <div class="band b1 w1"><span class="grip"></span>${this.cells(["preview", "print", "|", "cut", "copy"])}<span class="more">»</span></div>
        <div class="band b1 w2"><span class="grip"></span>${this.cells(["pic", "pics", "windows", "gcode", "graybook"])}<span class="more">»</span></div>
        <div class="band b1 w3"><span class="grip"></span>${this.cells(TABLE_BAR)}</div>
      </div>
      <div class="row">
        <div class="band b2 w4">
          <span class="grip"></span>${this.cells(["bold", "italic", "underline", "strike", "|"])}
          <span class="held"></span>${this.cells(["numlist", "form", "|", "palette", "pen", "|", "abc", "gearcheck"])}
        </div>
        <div class="band b2 w3"><span class="grip"></span><div class="combo plain font">${label("Arial", 21)}</div></div>
      </div>
      <div class="band b3">
        <span class="grip"></span>${this.cells(["type"])}
        <div class="combo style">${label("Normal text", 57)}</div>
        ${this.cells(["ruler"])}
        <div class="combo align">${label("left align", 44)}</div>
      </div>
    </div>`;
  }

  private editor() {
    const arrows = html`<div class="vm"><span class="up"></span><span class="dn"></span></div>`;
    return html`
      <div class="ruler">${RULER.map((n) => html`<span class="cm">${n}</span>`)}</div>
      <div class="tabs">${TABS.map(() => html`<span class="tab"></span>`)}</div>
      <div class="lab l1">${label("Header (PDF only):", 92)}</div>
      <div class="ed e1"><div class="strip">${label("{%PROGRAMNAME%} {%VERSION%} Manual", 278)}</div>${arrows}</div>
      <div class="lab l2">${label("Pages (RTF and PDF):", 106)}</div>
      <div class="ed e2">
        <div class="pages">
          <div class="dash"></div>
          <div class="cover"></div>
          <div class="dash"></div>
          <div class="doc">
            <p class="d0"><span class="bad">%</span>}</p>
            <p class="d1">Version {<span class="bad">%</span></p>
            <p><span class="bad">VERSION%</span>}</p>
            <p class="d2">User Manual</p>
            <p class="d3 sm">Copyright © {<span class="bad">%YEAR%</span>}</p>
            <p class="sm">{<span class="bad">%COMPANYNAME%</span>}</p>
          </div>
          <div class="dash"></div>
        </div>
        <div class="bs">
          <span class="btn"><span class="up"></span></span>
          <span class="bthumb"><span class="lines"></span></span>
          <span class="btn"><span class="dn"></span></span>
        </div>
      </div>
      <div class="lab l3">${label("Footer (PDF only):", 90)}</div>
      <div class="ed e3"><div class="strip">${label("{%PAGENUM%}", 102)}</div>${arrows}</div>
    `;
  }

  render() {
    return html`
      <div class="window">
        <div class="title">
          ${icon("app")}${label("Helpinator 3.16 - C:\\Projects\\helpinator.hpz (Registered to Dmitri Popov)", 383)}
          <div class="caps">
            <span class="cap min"><svg class="ic" width="12" height="6"><rect x=".5" y=".5" width="11" height="4" fill="#fff" stroke="#555b66" /></svg></span>
            <span class="cap"><svg class="ic" width="11" height="9"><rect x=".5" y=".5" width="10" height="8" fill="#fff" stroke="#555b66" /><rect x="3.500" y="3.500" width="4" height="2" fill="#9bb5cf" stroke="#555b66" /></svg></span>
            <span class="cap close"><svg class="ic" width="12" height="10"><path d="M2 1l8 8M10 1L2 9" stroke="#5a3a40" stroke-width="4" /><path d="M2 1l8 8M10 1L2 9" stroke="#fff" stroke-width="2.300" /></svg></span>
          </div>
        </div>
        <div class="client">
          <div class="menu">
            <span class="grip"></span>
            <span class="m1">${label("File", 19)}</span>
            <span class="m2">${label("Tools", 29)}</span>
            <span class="m2">${label("Help", 25)}</span>
          </div>
          <div class="bar">
            <span class="grip"></span>
            <div class="cells">
              ${MAIN_BAR.map((n) => (n === "|" ? html`<span class="sep"></span>` : html`<span class="cell">${icon(n, 24, 24)}</span>`))}
            </div>
            <span class="grip"></span>
            <div class="combo lang">${label("English (United States)", 110)}</div>
          </div>
          <div class="body">
            <div class="side">
              <div class="sidebox">
                <div class="hgrip"></div>
                ${SIDE.map((n) => html`<span class="sbtn">${icon(n)}</span>`)}
              </div>
            </div>
            <div class="left">
              <div class="panel p1">
                <div class="row">
                  <div class="tree t1">${this.tree(TREE)}</div>
                  <div class="vs"><span class="up"></span><span class="thumb th1"></span><span class="dn"></span></div>
                </div>
                <div class="hs"><span class="lt"></span><span class="hthumb"><span class="hlines"></span></span><span class="rt"></span></div>
              </div>
              <div class="split"></div>
              <div class="head">${icon("tools")}${label("Tools & Reports", 105)}</div>
              <div class="panel p2">
                <div class="tree t2">${this.tree(TOOLS)}</div>
                <div class="vs"><span class="up"></span><span class="thumb th2"><span class="lines"></span></span><span class="dn"></span></div>
              </div>
            </div>
            <div class="gap"></div>
            <div class="right">${this.bands()}${this.editor()}</div>
          </div>
          <div class="status">
            ${label("Modified", 41)}
            <svg class="ic" width="9" height="9"><path d="M7 1h2M4 4h2M7 4h2M1 7h2M4 7h2M7 7h2" stroke="#b5b2b2" stroke-width="2" /></svg>
          </div>
        </div>
      </div>

      <div class="note n1">${label("Editor toolbar", 65)}</div>
      <div class="note n2">${label("Header, uses project variables by default", 200)}</div>
      <div class="note n3">${label("Cover page", 56)}</div>
      <div class="note n4">${label("Footer (with page number", 125)}${label("by default)", 53)}</div>
      <svg class="arrow" width="68" height="22">
        <path d="M14 14L64 2" stroke="#f00" stroke-width="1.100" />
        <path d="M2 17.500L16.500 9l-2.500 5 3 4.500z" fill="#ff0" stroke="#f00" />
      </svg>
    `;
  }
}
